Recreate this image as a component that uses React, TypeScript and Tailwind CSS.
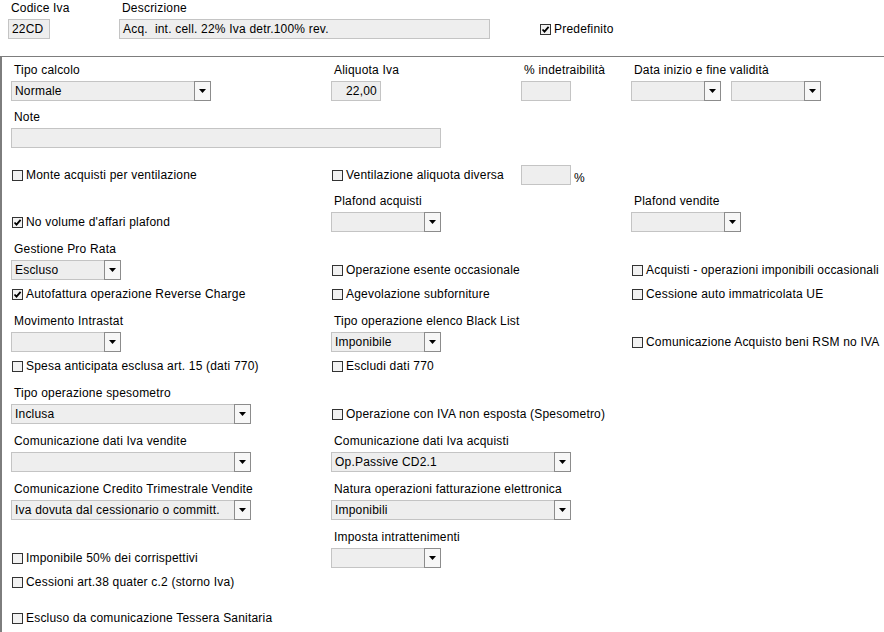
import type { ReactNode } from "react";

const FONT = { fontFamily: '"Liberation Sans", Arial, sans-serif' };

function Label({ children }: { children: ReactNode }) {
  return <div className="pl-[3px] text-[12px] leading-[14px] whitespace-nowrap text-black">{children}</div>;
}

function TextBox({ w, value = "", right = false }: { w: string; value?: string; right?: boolean }) {
  return (
    <div
      className={`${w} h-[20px] border border-[#c4c4c4] bg-[#eeeeee] flex items-center px-[3px] text-[12px] text-black whitespace-pre overflow-hidden ${
        right ? "justify-end" : ""
      }`}
    >
      {value}
    </div>
  );
}

function Select({ w, value = "" }: { w: string; value?: string }) {
  return (
    <div className={`${w} h-[20px] border border-[#c4c4c4] bg-[#eeeeee] flex items-center`}>
      <div className="flex-1 pl-[3px] text-[12px] text-black whitespace-nowrap overflow-hidden">{value}</div>
      <div className="w-[17px] h-[20px] border border-[#8c8c8c] bg-[#f7f7f7] flex items-center justify-center -mr-px">
        <svg width="7" height="4" viewBox="0 0 7 4">
          <path d="M0 0h7L3.5 4z" fill="#000" />
        </svg>
      </div>
    </div>
  );
}

function Field({ label, children }: { label: string; children: ReactNode }) {
  return (
    <div className="flex flex-col gap-[4px]">
      <Label>{label}</Label>
      {children}
    </div>
  );
}

function Check({ label, checked = false }: { label: string; checked?: boolean }) {
  return (
    <div className="h-[20px] flex items-center gap-[3px] pl-px text-[12px] text-black whitespace-nowrap">
      <div className="w-[11px] h-[11px] border border-[#333333] bg-[#f2f2f2] flex items-center justify-center">
        {checked && (
          <svg width="9" height="9" viewBox="0 0 9 9">
            <path d="M1.5 4.5l2 2.2L7.6 1.8" fill="none" stroke="#000" strokeWidth="1.8" />
          </svg>
        )}
      </div>
      <span>{label}</span>
    </div>
  );
}

function Row({ h, children }: { h: string; children: ReactNode }) {
  return <div className={`${h} grid grid-cols-[320px_300px_1fr] items-start`}>{children}</div>;
}

export default function App() {
  return (
    <div className="w-[884px] h-[632px] bg-white overflow-hidden tracking-[0.2px]" style={FONT}>
      <div className="h-[56px] flex items-start pl-[8px] pt-px">
        <div className="w-[111px] flex flex-col gap-[4px]">
          <Label>Codice Iva</Label>
          <TextBox w="w-[42px]" value="22CD" />
        </div>
        <div className="w-[420px] flex flex-col gap-[4px]">
          <Label>Descrizione</Label>
          <TextBox w="w-[371px]" value="Acq.  int. cell. 22% Iva detr.100% rev." />
        </div>
        <div className="pt-[18px]">
          <Check label="Predefinito" checked />
        </div>
      </div>

      <div className="h-[576px] border-t border-l-2 border-[#7d7d7d] pl-[9px] pt-[6px]">
        <Row h="h-[47px]">
          <Field label="Tipo calcolo">
            <Select w="w-[200px]" value="Normale" />
          </Field>
          <div className="flex">
            <div className="w-[190px]">
              <Field label="Aliquota Iva">
                <TextBox w="w-[50px]" value="22,00" right />
              </Field>
            </div>
            <Field label="% indetraibilità">
              <TextBox w="w-[50px]" />
            </Field>
          </div>
          <Field label="Data inizio e fine validità">
            <div className="flex gap-[10px]">
              <Select w="w-[90px]" />
              <Select w="w-[90px]" />
            </div>
          </Field>
        </Row>

        <Row h="h-[55px]">
          <div className="col-span-3">
            <Field label="Note">
              <TextBox w="w-[430px]" />
            </Field>
          </div>
        </Row>

        <Row h="h-[29px]">
          <Check label="Monte acquisti per ventilazione" />
          <div className="flex">
            <div className="w-[190px]">
              <Check label="Ventilazione aliquota diversa" />
            </div>
            <TextBox w="w-[50px]" />
            <span className="pl-[3px] pt-[6px] text-[12px] leading-[14px]">%</span>
          </div>
          <div />
        </Row>

        <Row h="h-[48px]">
          <div className="pt-[18px]">
            <Check label="No volume d'affari plafond" checked />
          </div>
          <Field label="Plafond acquisti">
            <Select w="w-[110px]" />
          </Field>
          <Field label="Plafond vendite">
            <Select w="w-[110px]" />
          </Field>
        </Row>

        <Row h="h-[42px]">
          <Field label="Gestione Pro Rata">
            <Select w="w-[110px]" value="Escluso" />
          </Field>
          <div className="pt-[18px]">
            <Check label="Operazione esente occasionale" />
          </div>
          <div className="pt-[18px]">
            <Check label="Acquisti - operazioni imponibili occasionali" />
          </div>
        </Row>

        <Row h="h-[30px]">
          <Check label="Autofattura operazione Reverse Charge" checked />
          <Check label="Agevolazione subforniture" />
          <Check label="Cessione auto immatricolata UE" />
        </Row>

        <Row h="h-[42px]">
          <Field label="Movimento Intrastat">
            <Select w="w-[110px]" />
          </Field>
          <Field label="Tipo operazione elenco Black List">
            <Select w="w-[110px]" value="Imponibile" />
          </Field>
          <div className="pt-[18px]">
            <Check label="Comunicazione Acquisto beni RSM no IVA" />
          </div>
        </Row>

        <Row h="h-[30px]">
          <Check label="Spesa anticipata esclusa art. 15 (dati 770)" />
          <Check label="Escludi dati 770" />
          <div />
        </Row>

        <Row h="h-[48px]">
          <Field label="Tipo operazione spesometro">
            <Select w="w-[240px]" value="Inclusa" />
          </Field>
          <div className="pt-[18px]">
            <Check label="Operazione con IVA non esposta (Spesometro)" />
          </div>
          <div />
        </Row>

        <Row h="h-[48px]">
          <Field label="Comunicazione dati Iva vendite">
            <Select w="w-[240px]" />
          </Field>
          <Field label="Comunicazione dati Iva acquisti">
            <Select w="w-[240px]" value="Op.Passive CD2.1" />
          </Field>
          <div />
        </Row>

        <Row h="h-[48px]">
          <Field label="Comunicazione Credito Trimestrale Vendite">
            <Select w="w-[240px]" value="Iva dovuta dal cessionario o committ." />
          </Field>
          <Field label="Natura operazioni fatturazione elettronica">
            <Select w="w-[240px]" value="Imponibili" />
          </Field>
          <div />
        </Row>

        <Row h="h-[42px]">
          <div className="pt-[18px]">
            <Check label="Imponibile 50% dei corrispettivi" />
          </div>
          <Field label="Imposta intrattenimenti">
            <Select w="w-[110px]" />
          </Field>
          <div />
        </Row>

        <Row h="h-[36px]">
          <Check label="Cessioni art.38 quater c.2 (storno Iva)" />
          <div />
          <div />
        </Row>

        <Row h="h-[20px]">
          <Check label="Escluso da comunicazione Tessera Sanitaria" />
          <div />
          <div />
        </Row>
      </div>
    </div>
  );
}
